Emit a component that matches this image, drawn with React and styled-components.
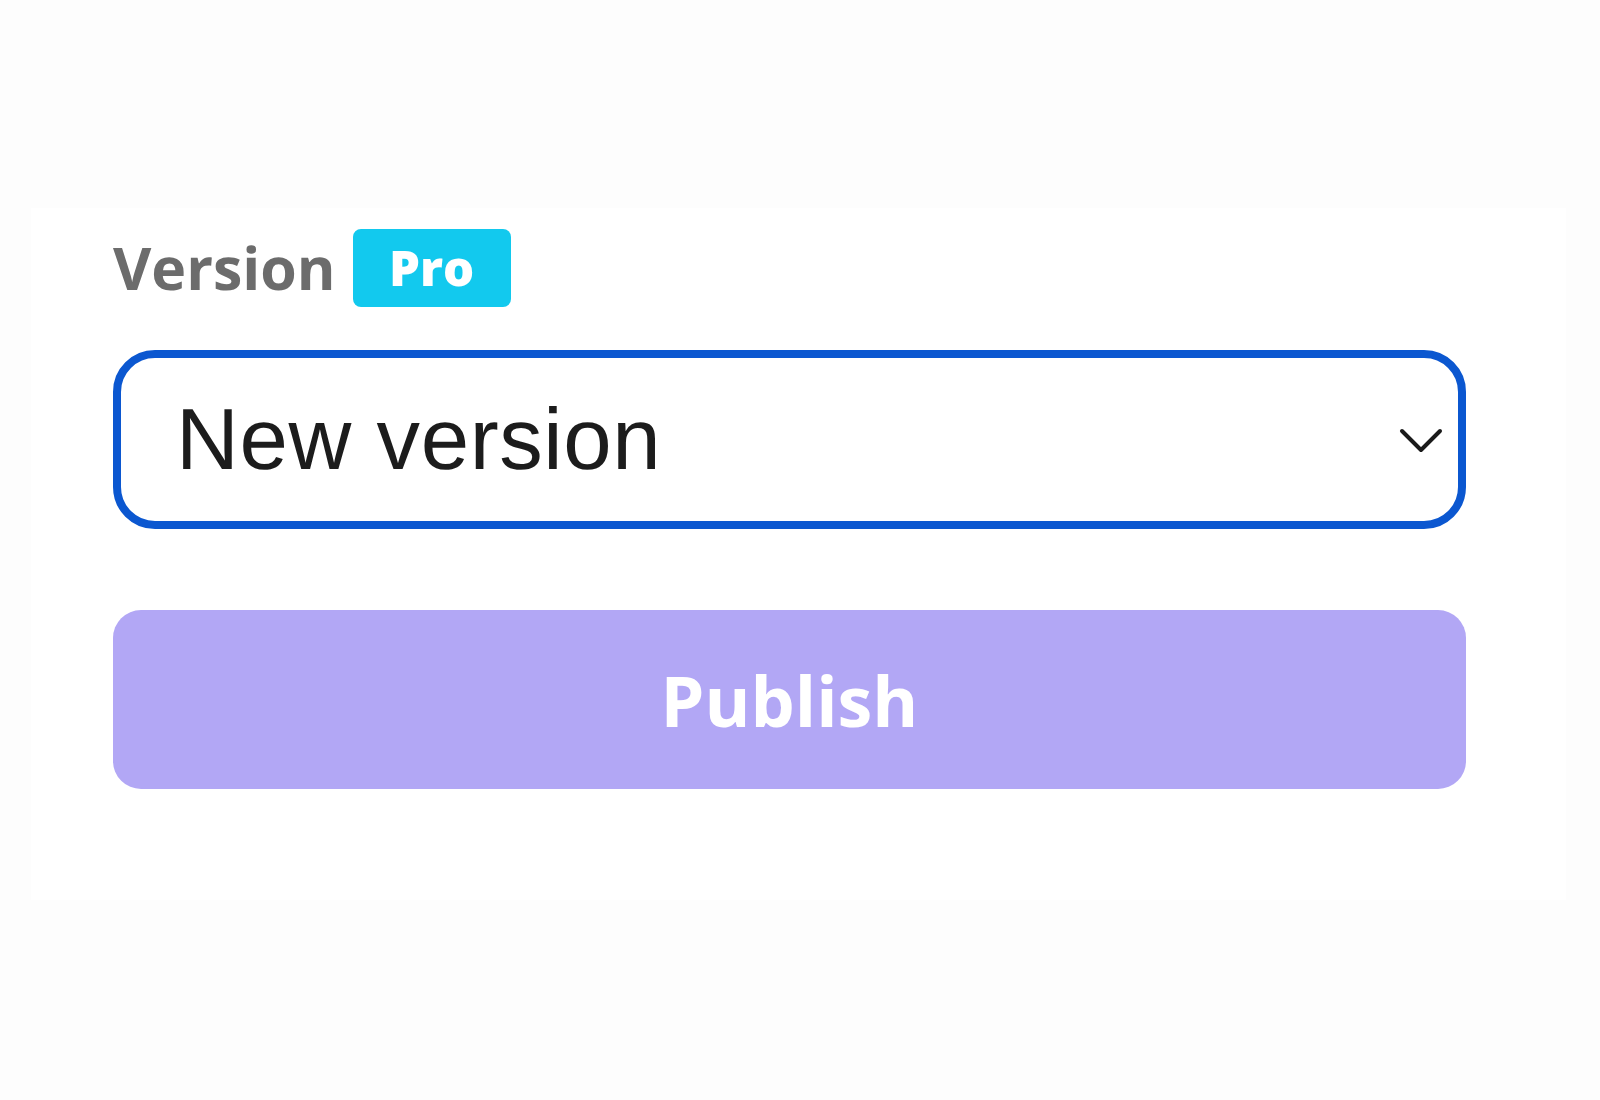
import styled, { createGlobalStyle } from 'styled-components';

const GlobalStyle = createGlobalStyle`
  html, body {
    margin: 0;
    padding: 0;
    background: #fdfdfd;
  }
  body {
    font-family: 'Open Sans', 'Liberation Sans', sans-serif;
    text-rendering: geometricPrecision;
    -webkit-font-smoothing: antialiased;
  }
`;

const Page = styled.div`
  width: 1600px;
  height: 1100px;
  padding-top: 208px;
  padding-left: 31px;
  box-sizing: border-box;
`;

const Panel = styled.section`
  width: 1535px;
  height: 692px;
  background: #ffffff;
  box-sizing: border-box;
  padding: 21px 100px 0 82px;
  display: flex;
  flex-direction: column;
`;

const LabelRow = styled.div`
  height: 78px;
  display: flex;
  align-items: center;
  gap: 17px;
`;

const Label = styled.span`
  font-family: 'Open Sans', sans-serif;
  font-size: 59px;
  font-weight: 700;
  color: #6c6c6c;
  line-height: 1;
`;

const Badge = styled.span`
  width: 158px;
  height: 78px;
  border-radius: 8px;
  background: #12c9ee;
  color: #ffffff;
  font-family: 'Open Sans', sans-serif;
  font-size: 49px;
  font-weight: 800;
  display: flex;
  align-items: center;
  justify-content: center;
`;

const Select = styled.div`
  margin-top: 43px;
  height: 179px;
  box-sizing: border-box;
  border: 8px solid #0b57d0;
  border-radius: 42px;
  display: flex;
  align-items: center;
  justify-content: space-between;
  padding: 0 14px 0 55px;
  cursor: pointer;
`;

const SelectText = styled.span`
  font-family: 'Liberation Sans', Arial, sans-serif;
  font-size: 87px;
  letter-spacing: 0.6px;
  color: #1c1c1c;
  line-height: 1;
`;

const Chevron = styled.svg`
  width: 46px;
  height: 28px;
`;

const PublishButton = styled.button`
  margin-top: 81px;
  height: 179px;
  width: 100%;
  border: none;
  border-radius: 28px;
  background: #b2a7f5;
  color: #ffffff;
  font-family: 'Open Sans', sans-serif;
  font-size: 70px;
  font-weight: 700;
  cursor: not-allowed;
`;

const App = () => {
  return (
    <Page>
      <GlobalStyle />
      <Panel>
        <LabelRow>
          <Label>Version</Label>
          <Badge>Pro</Badge>
        </LabelRow>
        <Select>
          <SelectText>New version</SelectText>
          <Chevron viewBox="0 0 46 28" fill="none">
            <path d="M4 5 L23 24 L42 5" stroke="#1a1a1a" strokeWidth="4" strokeLinecap="round" strokeLinejoin="round" />
          </Chevron>
        </Select>
        <PublishButton disabled>Publish</PublishButton>
      </Panel>
    </Page>
  );
};

export default App;
